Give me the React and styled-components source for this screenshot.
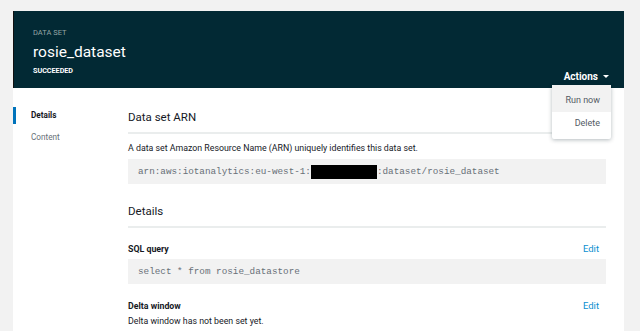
import React from "react"
import styled, { createGlobalStyle } from "styled-components"

const GlobalStyle = createGlobalStyle`
  html, body {
    margin: 0;
    padding: 0;
    background: #f2f2f2;
    font-family: Roboto, "Noto Sans", "Liberation Sans", sans-serif;
    color: #16191f;
  }
  * { box-sizing: border-box; }
`

const App = () => {
  return (
    <Page>
      <GlobalStyle />
      <Panel>
        <Header>
          <Overline>DATA SET</Overline>
          <Title>rosie_dataset</Title>
          <HeaderBottom>
            <Status>SUCCEEDED</Status>
            <ActionsButton>
              Actions <Caret />
            </ActionsButton>
          </HeaderBottom>
          <Menu>
            <MenuItem active>Run now</MenuItem>
            <MenuItem>Delete</MenuItem>
          </Menu>
        </Header>
        <Body>
          <Sidebar>
            <NavItem active>Details</NavItem>
            <NavItem>Content</NavItem>
          </Sidebar>
          <Main>
            <SectionTitle>Data set ARN</SectionTitle>
            <Text>A data set Amazon Resource Name (ARN) uniquely identifies this data set.</Text>
            <Code>
              arn:aws:iotanalytics:eu-west-1:<Redacted />:dataset/rosie_dataset
            </Code>
            <SectionTitle spaced>Details</SectionTitle>
            <FieldRow>
              <Label>SQL query</Label>
              <EditLink href="#edit">Edit</EditLink>
            </FieldRow>
            <Code tight>select * from rosie_datastore</Code>
            <FieldRow spaced>
              <Label>Delta window</Label>
              <EditLink href="#edit">Edit</EditLink>
            </FieldRow>
            <Text tight>Delta window has not been set yet.</Text>
          </Main>
        </Body>
      </Panel>
    </Page>
  )
}

const Page = styled.div`
  padding: 11px 16px 0 13px;
  height: 331px;
  overflow: hidden;
`

const Panel = styled.div`
  background: #fff;
  min-height: 320px;
`

const Header = styled.div`
  position: relative;
  background: #022934;
  border-left: 1px solid #111;
  height: 77px;
  padding: 17px 15px 0 19px;
  display: flex;
  flex-direction: column;
`

const Overline = styled.div`
  font-size: 7.5px;
  color: #95a5a6;
  line-height: 10px;
`

const Title = styled.h1`
  margin: 3px 0 0;
  font-size: 15.5px;
  font-weight: 400;
  color: #fff;
  line-height: 22px;
`

const HeaderBottom = styled.div`
  display: flex;
  justify-content: space-between;
  align-items: flex-start;
`

const Status = styled.div`
  font-size: 7.2px;
  font-weight: 700;
  color: #fff;
  line-height: 12px;
  padding-top: 2px;
`

const ActionsButton = styled.div`
  display: flex;
  align-items: center;
  gap: 5px;
  font-size: 10px;
  font-weight: 700;
  color: #fff;
  margin-top: 8px;
`

const Caret = styled.span`
  width: 0;
  height: 0;
  border-left: 3px solid transparent;
  border-right: 3px solid transparent;
  border-top: 3px solid #fff;
`

const Menu = styled.div`
  position: absolute;
  top: 74px;
  right: 13px;
  width: 59px;
  background: #fff;
  border-radius: 2px;
  box-shadow: 0 1px 4px rgba(0, 28, 36, 0.3);
  padding-bottom: 5px;
  z-index: 2;
`

const MenuItem = styled.div`
  font-size: 9px;
  color: #545b64;
  text-align: right;
  white-space: nowrap;
  padding: 0 11px 0 0;
  height: ${p => (p.active ? "27px" : "22px")};
  line-height: ${p => (p.active ? "30px" : "22px")};
  background: ${p => (p.active ? "#f2f2f2" : "#fff")};
`

const Body = styled.div`
  display: flex;
`

const Sidebar = styled.nav`
  width: 115px;
  padding-top: 19px;
  display: flex;
  flex-direction: column;
  gap: 5px;
`

const NavItem = styled.div`
  font-size: 8.2px;
  line-height: 17px;
  padding-left: 15px;
  color: ${p => (p.active ? "#16191f" : "#687078")};
  font-weight: ${p => (p.active ? 700 : 400)};
  border-left: 3px solid ${p => (p.active ? "#0073bb" : "transparent")};
`

const Main = styled.div`
  flex: 1;
  padding: 21px 18px 0 0;
`

const SectionTitle = styled.h2`
  margin: ${p => (p.spaced ? "19px" : "0")} 0 0;
  font-size: 11.5px;
  font-weight: 400;
  line-height: 16px;
  color: #16191f;
  padding-bottom: 7px;
  border-bottom: 2px solid #eaeded;
`

const Text = styled.p`
  margin: ${p => (p.tight ? "1px" : "7px")} 0 0;
  font-size: 8.8px;
  line-height: 14px;
  color: #16191f;
`

const Code = styled.div`
  margin-top: ${p => (p.tight ? "3px" : "4px")};
  background: #f2f2f2;
  height: 25px;
  padding: 0 10px;
  display: flex;
  align-items: center;
  font-family: "Liberation Mono", "Courier New", monospace;
  font-size: 9.3px;
  color: #687078;
  white-space: pre;
`

const Redacted = styled.span`
  display: inline-block;
  width: 66px;
  height: 14px;
  background: #000;
`

const FieldRow = styled.div`
  display: flex;
  justify-content: space-between;
  align-items: center;
  margin-top: ${p => (p.spaced ? "15px" : "14px")};
  padding-right: 7px;
`

const Label = styled.div`
  font-size: 8.8px;
  font-weight: 700;
  line-height: 14px;
`

const EditLink = styled.a`
  font-size: 9.5px;
  color: #0a8fd0;
  text-decoration: none;
  line-height: 14px;
`

export default App
